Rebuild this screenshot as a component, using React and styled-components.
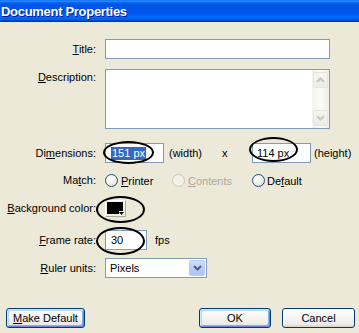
import React from "react";
import styled, { createGlobalStyle } from "styled-components";

const Global = createGlobalStyle`
  html, body { margin: 0; padding: 0; background: #ECE9D8; }
  body { font-family: "Liberation Sans", Arial, sans-serif; font-size: 11px; color: #000; }
  * { box-sizing: border-box; }
`;

const Dialog = styled.div`
  width: 359px;
  height: 333px;
  background: #ECE9D8;
  display: flex;
  flex-direction: column;
  overflow: hidden;
`;

const TitleBar = styled.div`
  height: 22px;
  flex: none;
  display: flex;
  align-items: center;
  padding-left: 1px;
  background: linear-gradient(180deg, #0058EE 0%, #3593FF 4%, #288EFF 6%, #127DFF 8%, #036FFC 10%, #0262EE 14%, #0057E5 20%, #0054E3 24%, #0055EB 56%, #005BF5 66%, #026AFE 76%, #0062EF 86%, #0052D6 92%, #0040AB 96%, #003092 100%);
  color: #fff;
  font-weight: bold;
  font-size: 13px;
  letter-spacing: -0.3px;
  text-shadow: 1px 1px 0 #0A1A8C;
`;

const Body = styled.div`
  display: flex;
  flex-direction: column;
`;

const Row = styled.div`
  display: grid;
  grid-template-columns: 96px 1fr;
  column-gap: 9px;
  align-items: ${(p) => (p.$top ? "start" : "center")};
  height: ${(p) => p.$h}px;
  margin-top: ${(p) => p.$mt}px;
`;

const Label = styled.div`
  text-align: right;
  white-space: nowrap;
  line-height: 13px;
  padding-top: ${(p) => p.$pt || 0}px;
`;

const U = styled.span`
  text-decoration: underline;
  text-underline-offset: 1px;
`;

const Field = styled.div`
  position: relative;
  width: ${(p) => p.$w}px;
  height: 20px;
  border: 1px solid #7F9DB9;
  background: #fff;
  display: flex;
  align-items: center;
  padding-left: ${(p) => p.$pl ?? 4}px;
  line-height: 13px;
`;

const Selected = styled.span`
  background: #316AC5;
  color: #fff;
  padding: 0 1px;
`;

const TextArea = styled.div`
  width: 225px;
  height: 60px;
  border: 1px solid #7F9DB9;
  background: #fff;
  display: flex;
  justify-content: flex-end;
`;

const ScrollBar = styled.div`
  width: 17px;
  padding: 2px 1px 2px 1px;
  display: flex;
  flex-direction: column;
  justify-content: space-between;
  background: linear-gradient(90deg, #F3F2EC 0%, #FBFBF8 50%, #EEEDE5 100%);
`;

const ScrollBtn = styled.div`
  height: 16px;
  border: 1px solid #E6E5DD;
  border-radius: 2px;
  background: linear-gradient(180deg, #F6F5F0 0%, #EDECE5 100%);
  display: flex;
  align-items: center;
  justify-content: center;
`;

const DimGrid = styled.div`
  display: grid;
  grid-template-columns: 59px 58px 30px 59px auto;
  align-items: center;
`;

const Unit = styled.span`
  padding-left: ${(p) => p.$pl}px;
  white-space: nowrap;
`;

const Ellipse = styled.div`
  position: absolute;
  left: ${(p) => p.$l}px;
  top: ${(p) => p.$t}px;
  width: ${(p) => p.$w}px;
  height: ${(p) => p.$h}px;
  border: 2px solid #000;
  border-radius: 50%;
  pointer-events: none;
`;

const RadioGrid = styled.div`
  display: grid;
  grid-template-columns: 67px 80px auto;
  align-items: center;
`;

const RadioItem = styled.label`
  display: flex;
  align-items: center;
  gap: ${(p) => p.$gap ?? 3}px;
  color: ${(p) => (p.$disabled ? "#ACA899" : "#000")};
  white-space: nowrap;
`;

const RadioDot = styled.span`
  width: 13px;
  height: 13px;
  border-radius: 50%;
  border: 1px solid ${(p) => (p.$disabled ? "#CAC8BB" : "#1C5180")};
  background: ${(p) =>
    p.$disabled
      ? "#F2F1EA"
      : "radial-gradient(circle at 35% 35%, #FFFFFF 0%, #F4F3EE 40%, #D9D6CB 100%)"};
  flex: none;
`;

const SwatchWrap = styled.div`
  position: relative;
  width: 21px;
  height: 17px;
`;

const Swatch = styled.div`
  width: 21px;
  height: 17px;
  border: 1px solid;
  border-color: #FFFFFF #ACA899 #ACA899 #FFFFFF;
  background: #F1EFE2;
  display: flex;
`;

const FpsRow = styled.div`
  display: flex;
  align-items: center;
  gap: 8px;
`;

const Select = styled.div`
  width: 102px;
  height: 20px;
  border: 1px solid #7F9DB9;
  background: #fff;
  display: flex;
  align-items: center;
  justify-content: space-between;
  padding: 1px 1px 1px 4px;
`;

const DropBtn = styled.div`
  width: 16px;
  height: 16px;
  border: 1px solid #B9CDF6;
  border-radius: 2px;
  background: linear-gradient(180deg, #D1DEFD 0%, #B8CBF6 60%, #AFC3F3 100%);
  display: flex;
  align-items: center;
  justify-content: center;
`;

const Buttons = styled.div`
  margin-top: 30px;
  height: 20px;
  padding: 0 4px 0 6px;
  display: flex;
  justify-content: space-between;
`;

const Group = styled.div`
  display: flex;
  gap: 11px;
`;

const Button = styled.div`
  width: ${(p) => p.$w}px;
  height: 20px;
  border: 1px solid #003C74;
  border-radius: 3px;
  background: linear-gradient(180deg, #FFFFFF 0%, #F7F7F4 40%, #ECEBE6 85%, #D6D0C5 100%);
  box-shadow: ${(p) =>
    p.$default
      ? "inset 1px 1px 0 #CEE7FF, inset -1px -1px 0 #6982EE, inset 2px 2px 0 #BCD4F6, inset -2px -2px 0 #89ADE4"
      : "inset 1px 1px 0 #FFFFFF"};
  display: flex;
  align-items: center;
  justify-content: center;
  line-height: 13px;
`;

function Chevron({ up, color }) {
  return (
    <svg width="9" height="6" viewBox="0 0 9 6">
      <path
        d={up ? "M1 5 L4.5 1.5 L8 5" : "M1 1 L4.5 4.5 L8 1"}
        fill="none"
        stroke={color}
        strokeWidth="2"
      />
    </svg>
  );
}

export default function App() {
  return (
    <>
      <Global />
      <Dialog>
        <TitleBar>Document Properties</TitleBar>
        <Body>
          <Row $mt={17} $h={20}>
            <Label><U>T</U>itle:</Label>
            <Field $w={225} />
          </Row>

          <Row $mt={10} $h={60} $top>
            <Label $pt={2}><U>D</U>escription:</Label>
            <TextArea>
              <ScrollBar>
                <ScrollBtn><Chevron up color="#C8C7C0" /></ScrollBtn>
                <ScrollBtn><Chevron color="#C8C7C0" /></ScrollBtn>
              </ScrollBar>
            </TextArea>
          </Row>

          <Row $mt={14} $h={20}>
            <Label>Di<U>m</U>ensions:</Label>
            <DimGrid>
              <Field $w={59} $pl={5}>
                <Selected>151 px</Selected>
                <Ellipse $l={-3} $t={-3} $w={51} $h={23} />
              </Field>
              <Unit $pl={5}>(width)</Unit>
              <Unit $pl={0}>x</Unit>
              <Field $w={59} $pl={4}>
                114 px
                <Ellipse $l={-4} $t={-7} $w={49} $h={25} />
              </Field>
              <Unit $pl={3}>(height)</Unit>
            </DimGrid>
          </Row>

          <Row $mt={11} $h={13}>
            <Label>Ma<U>t</U>ch:</Label>
            <RadioGrid>
              <RadioItem><RadioDot /><span><U>P</U>rinter</span></RadioItem>
              <RadioItem $disabled><RadioDot $disabled /><span><U>C</U>ontents</span></RadioItem>
              <RadioItem $gap={2}><RadioDot /><span>De<U>f</U>ault</span></RadioItem>
            </RadioGrid>
          </Row>

          <Row $mt={13} $h={17}>
            <Label><U>B</U>ackground color:</Label>
            <SwatchWrap>
              <Swatch>
                <svg width="19" height="15" viewBox="0 0 19 15">
                  <rect x="1" y="1" width="16" height="12" fill="#000" />
                  <rect x="13" y="10" width="6" height="5" fill="#F1EFE2" />
                  <path d="M13 11 L18 11 L15.5 14 Z" fill="#000" />
                </svg>
              </Swatch>
              <Ellipse $l={-9} $t={-4} $w={49} $h={27} />
            </SwatchWrap>
          </Row>

          <Row $mt={13} $h={20}>
            <Label><U>F</U>rame rate:</Label>
            <FpsRow>
              <Field $w={42} $pl={5}>
                30
                <Ellipse $l={-10} $t={-4} $w={49} $h={28} />
              </Field>
              <span>fps</span>
            </FpsRow>
          </Row>

          <Row $mt={8} $h={20}>
            <Label><U>R</U>uler units:</Label>
            <Select>
              <span>Pixels</span>
              <DropBtn><Chevron color="#4D6185" /></DropBtn>
            </Select>
          </Row>

          <Buttons>
            <Button $w={79} $default><span><U>M</U>ake Default</span></Button>
            <Group>
              <Button $w={72} $default>OK</Button>
              <Button $w={73}>Cancel</Button>
            </Group>
          </Buttons>
        </Body>
      </Dialog>
    </>
  );
}
